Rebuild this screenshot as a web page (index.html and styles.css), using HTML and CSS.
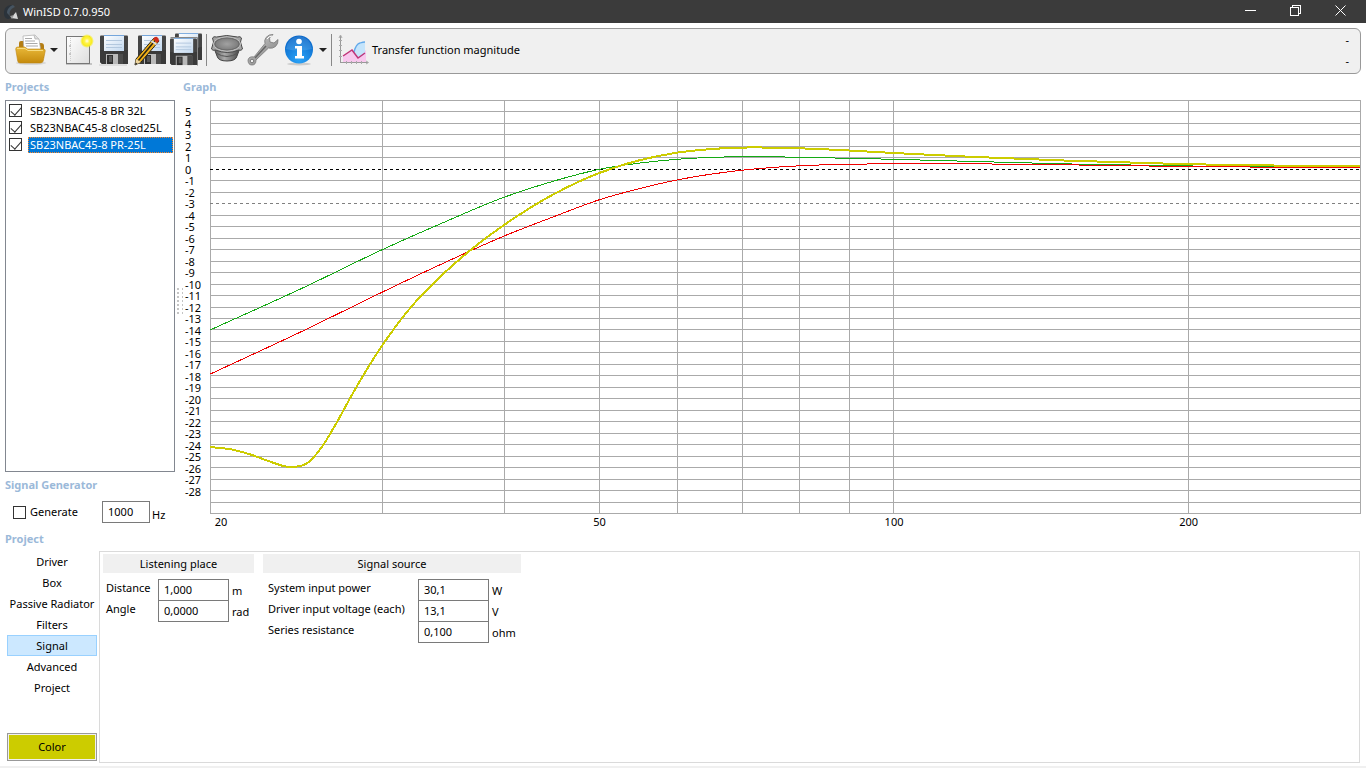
FILE: index.html
```
<!DOCTYPE html>
<html lang="en">

<head>
    <meta charset="UTF-8">
    <meta name="viewport" content="width=device-width, initial-scale=1.0">
    <title>WinISD 0.7.0.950</title>
    <link rel="stylesheet" href="styles.css">
</head>

<body>
    <header class="titlebar">
        <svg class="app-icon" viewBox="0 0 16 16">
            <path d="M9 1C4 1 1 4 1 9c0 4 2 6 5 6l2-2C4 12 4 6 10 3z" fill="#2b333b"/>
            <path d="M10 1C7 2 4 5 4 9l3 3c-1-4 0-7 5-9z" fill="#465461"/>
            <path d="M8 14l5-6 2 7z" fill="#d8d8d8"/>
            <path d="M7 12l4-1-2 4z" fill="#9a9a9a"/>
        </svg>
        <h1>WinISD 0.7.0.950</h1>
        <div class="window-buttons">
            <button type="button" aria-label="Minimize"><svg viewBox="0 0 11 11"><path d="M0 5.5h11"/></svg></button>
            <button type="button" aria-label="Restore"><svg viewBox="0 0 11 11"><path d="M.5 2.5h8v8h-8zM2.5 2.5v-2h8v8h-2"/></svg></button>
            <button type="button" aria-label="Close"><svg class="smooth" viewBox="0 0 11 11"><path d="M.5.5l10 10M10.500.5l-10 10"/></svg></button>
        </div>
    </header>

    <svg class="defs" aria-hidden="true">
        <defs>
            <linearGradient id="gold" x1="0" y1="0" x2="0" y2="1">
                <stop offset="0" stop-color="#e9b93a"/><stop offset="1" stop-color="#c58a0c"/>
            </linearGradient>
            <linearGradient id="paper" x1="0" y1="0" x2="1" y2="1">
                <stop offset="0" stop-color="#fff"/><stop offset="1" stop-color="#dedede"/>
            </linearGradient>
            <linearGradient id="label" x1="0" y1="0" x2="1" y2="1">
                <stop offset="0" stop-color="#fff"/><stop offset="1" stop-color="#c3d9f0"/>
            </linearGradient>
            <linearGradient id="steel" x1="0" y1="0" x2="1" y2="0">
                <stop offset="0" stop-color="#555"/><stop offset=".4" stop-color="#aaa"/><stop offset="1" stop-color="#444"/>
            </linearGradient>
            <linearGradient id="wrench" x1="0" y1="0" x2="1" y2="1">
                <stop offset="0" stop-color="#d4d4d4"/><stop offset="1" stop-color="#777"/>
            </linearGradient>
            <radialGradient id="blue" cx=".5" cy=".85" r=".8">
                <stop offset="0" stop-color="#2ba4f8"/><stop offset="1" stop-color="#0867c9"/>
            </radialGradient>
            <radialGradient id="glow">
                <stop offset="0" stop-color="#fffef0"/><stop offset=".35" stop-color="#fff34a"/><stop offset=".7" stop-color="#f8ec20"/><stop offset="1" stop-color="#f8ec20" stop-opacity="0"/>
            </radialGradient>
            <radialGradient id="cone">
                <stop offset="0" stop-color="#a2a2a2"/><stop offset="1" stop-color="#777"/>
            </radialGradient>
            <symbol id="floppy" viewBox="0 0 28 30" preserveAspectRatio="none">
                <path d="M1 .5h26q1 0 1 1V29H2L0 27V1.500Q0 .5 1 .5z" fill="#454545"/>
                <path d="M0 15h28v14H2l-2-2z" fill="#3a3a3a"/>
                <rect x="4" width="20" height="16" fill="url(#label)"/>
                <path d="M4 .5h20" stroke="#75a6dc"/>
                <path d="M6 5.500h16M6 9.500h16M6 12.500h16" stroke="#b3c8de"/>
                <rect x="6" y="19" width="17" height="10" fill="#b9b9b9"/>
                <rect x="7" y="20" width="6" height="9" fill="#303030"/>
                <rect x="9" y="21" width="3" height="6" fill="#555"/>
                <rect x="18" y="19" width="5" height="10" fill="#4c4c4c"/>
            </symbol>
        </defs>
    </svg>

    <nav class="toolbar">
        <button type="button" aria-label="Open project">
            <svg viewBox="0 0 32 32">
                <ellipse cx="17" cy="29" rx="15" ry="2" fill="#d8d8d8"/>
                <path d="M5 9q0-2 2-2h5l2 2h13q3 0 3 3v12H5z" fill="#b47d12"/>
                <path d="M9 2l12-1 4 4 2 13H10z" fill="#fff" stroke="#aaa" stroke-width=".7"/>
                <path d="M20 1l1 4h4" fill="#ddd" stroke="#aaa" stroke-width=".7"/>
                <path d="M11 4.500h7M11 7h10M11.500 9.500h12M12 12h12" stroke="#aaa"/>
                <path d="M1.700 15q0-2 2-2h7l3 2h15q3 0 2.500 2l-2 10q-.5 2-3 2H6q-2 0-2.300-2z" fill="url(#gold)" stroke="#bd8714" stroke-width=".6"/>
                <path d="M3 14.500h8l3 2h15" fill="none" stroke="#f7dc82"/>
            </svg>
        </button>
        <button type="button" class="arrow" aria-label="Open recent"></button>
        <button type="button" aria-label="New project">
            <svg viewBox="0 0 32 32">
                <path d="M4 30h26" stroke="#999" stroke-width="2" opacity=".5"/>
                <rect x="4.500" y="2.500" width="23" height="27" fill="url(#paper)" stroke="#777"/>
                <path d="M8.500 4v24" stroke="#ccc" stroke-dasharray="1 1"/>
                <circle cx="8" cy="12" r="1" fill="#bbb"/><circle cx="8" cy="20" r="1" fill="#bbb"/>
                <circle cx="25" cy="7" r="7" fill="url(#glow)"/>
            </svg>
        </button>
        <button type="button" aria-label="Save">
            <svg viewBox="0 0 32 32"><path d="M1 31h28" stroke="#ccc"/><use href="#floppy" x="2" y="1" width="28" height="30"/></svg>
        </button>
        <button type="button" aria-label="Save as">
            <svg viewBox="0 0 32 32">
                <use href="#floppy" x="4" y="1" width="28" height="30"/>
                <path d="M20 4l5 3L7 28l-6 3 1-6z" fill="#f2b21b" stroke="#2a2414"/>
                <path d="M21.500 6L4 27" stroke="#2a2414" stroke-width="1.500"/>
                <path d="M2 25l5 3-6 3z" fill="#eed6a0"/><path d="M1 31l.5-2.500 2 1.200z" fill="#222"/>
                <path d="M17.500 7l5 3.500" stroke="#ddd" stroke-width="2"/>
                <path d="M19 5q2-3 4-2t2 4l-2 2z" fill="#cf2b1c"/>
            </svg>
        </button>
        <button type="button" aria-label="Save all">
            <svg viewBox="0 0 32 32">
                <use href="#floppy" x="5" y="-1" width="27" height="28"/>
                <path d="M.5 3.500h27v28" fill="none" stroke="#888"/>
                <use href="#floppy" x="0" y="4" width="27" height="28"/>
            </svg>
        </button>
        <span class="separator"></span>
        <button type="button" aria-label="Drivers">
            <svg viewBox="0 0 32 32">
                <path d="M3 14l3 8q1 5 10 5t10-5l3-8z" fill="url(#steel)" stroke="#444"/>
                <path d="M5 19q11 7 22 0" fill="none" stroke="#555"/>
                <path d="M1.500 4q1-2 4-1 10-3 21 0 3-1 4 1l-1 4 2 7q-1 2-4 1-11 5-23 0-3 1-4-1l2-7z" fill="#a5a5a5" stroke="#4a4a4a"/>
                <ellipse cx="16" cy="10" rx="13.500" ry="7" fill="url(#cone)" stroke="#c4c4c4"/>
                <ellipse cx="16" cy="10" rx="12" ry="6" fill="none" stroke="#666" stroke-width=".8"/>
            </svg>
        </button>
        <button type="button" aria-label="Options">
            <svg viewBox="0 0 32 32">
                <path d="M26 .5q-4-.5-7 3-2 3-1 6L7 23q-5-1-6 3 0 5 4 5 4 0 4-5l12.500-12q4 1 7-1.500 3-3 2.500-7l-4 3.500-4-1-.5-4z" fill="url(#wrench)" stroke="#777" stroke-width=".8"/>
                <path d="M19 12L8 24" stroke="#666" stroke-width="1.500"/>
                <path d="M20 5q2-3 5-3" fill="none" stroke="#fff"/>
                <circle cx="5" cy="27" r="1.800" fill="#f0f0f0" stroke="#777"/>
            </svg>
        </button>
        <button type="button" aria-label="About">
            <svg viewBox="0 0 32 32">
                <ellipse cx="16" cy="30" rx="12" ry="1.500" fill="#ccc"/>
                <circle cx="16" cy="15.500" r="14" fill="url(#blue)"/>
                <path d="M3 15q2-12 13-13 11 1 13 13-13 3-26 0z" fill="#fff" opacity=".12"/>
                <circle cx="16" cy="7.500" r="2.800" fill="#fff"/>
                <path d="M12 12h7v10h2v2.500h-9V22h2v-7.500h-2z" fill="#fff"/>
            </svg>
        </button>
        <button type="button" class="arrow" aria-label="Help menu"></button>
        <span class="separator"></span>
        <button type="button" class="chart-type">
            <svg viewBox="0 0 32 32">
                <path d="M5 22l10-6 7 6 6-6v13H5z" fill="#f8c8ee"/>
                <path d="M15 18q3-10 12-10v12l-6 4z" fill="#c4e4fb"/>
                <path d="M16 18q2-8 6-9 3-1 5-1" fill="none" stroke="#62a9ea" stroke-width="1.300"/>
                <path d="M5 22l9-6 6 8 7-5" fill="none" stroke="#c03378" stroke-width="1.500"/>
                <path d="M2.500 2v26.500M2 28.500h28" fill="none" stroke="#999"/>
                <path d="M1 6.500h3M1 11.500h3M1 16.500h3M1 22.500h3M8.500 27v3M13.500 27v3M18.500 27v3M23.500 27v3M1 4l1.500-3L4 4M28 27l2.500 1.500L28 30" fill="none" stroke="#aaa"/>
            </svg>
            <span>Transfer function magnitude</span>
        </button>
        <div class="readout"><span>-</span><span>-</span></div>
    </nav>

    <main class="workspace">
        <aside class="sidebar">
            <h2>Projects</h2>
            <ul class="project-list">
                <li><input type="checkbox" id="p1" checked><label for="p1">SB23NBAC45-8 BR 32L</label></li>
                <li><input type="checkbox" id="p2" checked><label for="p2">SB23NBAC45-8 closed25L</label></li>
                <li class="selected"><input type="checkbox" id="p3" checked><label for="p3">SB23NBAC45-8 PR-25L</label></li>
            </ul>
            <h2>Signal Generator</h2>
            <div class="generator">
                <input type="checkbox" id="generate">
                <label for="generate">Generate</label>
                <input type="text" id="frequency" value="1000" aria-label="Frequency">
                <label for="frequency">Hz</label>
            </div>
        </aside>
        <div class="splitter"></div>
        <section class="graph">
            <h2>Graph</h2>
            <div class="y-axis" id="yAxis"></div>
            <svg class="plot" id="plot"></svg>
            <div class="x-axis" id="xAxis"></div>
        </section>
    </main>

    <h2 class="project-heading">Project</h2>
    <section class="project">
        <div class="tabs">
            <button type="button">Driver</button>
            <button type="button">Box</button>
            <button type="button">Passive Radiator</button>
            <button type="button">Filters</button>
            <button type="button" class="active">Signal</button>
            <button type="button">Advanced</button>
            <button type="button">Project</button>
            <button type="button" class="color">Color</button>
        </div>
        <form class="panel">
            <div class="group listening">
                <h3>Listening place</h3>
                <div class="field"><label for="distance">Distance</label><input type="text" id="distance" value="1,000"><span>m</span></div>
                <div class="field"><label for="angle">Angle</label><input type="text" id="angle" value="0,0000"><span>rad</span></div>
            </div>
            <div class="group source">
                <h3>Signal source</h3>
                <div class="field"><label for="power">System input power</label><input type="text" id="power" value="30,1"><span>W</span></div>
                <div class="field"><label for="voltage">Driver input voltage (each)</label><input type="text" id="voltage" value="13,1"><span>V</span></div>
                <div class="field"><label for="resistance">Series resistance</label><input type="text" id="resistance" value="0,100"><span>ohm</span></div>
            </div>
        </form>
    </section>
    <footer class="statusbar"></footer>

    <script src="graph.js"></script>
</body>

</html>
```
FILE: styles.css
```
* {
    box-sizing: border-box;
}

body {
    display: flex;
    flex-direction: column;
    min-height: 100vh;
    margin: 0;
    background: #fff;
    color: #000;
    font-family: "Noto Sans", "Open Sans", sans-serif;
    font-size: 11px;
    line-height: 16px;
}

button,
input {
    font: inherit;
    color: inherit;
}

button {
    padding: 0;
    border: none;
    background: none;
}

h2 {
    margin: 0;
    color: #9bb9d9;
    font-size: 11px;
    font-weight: 700;
}

.defs {
    position: absolute;
    width: 0;
    height: 0;
}

/* title bar */
.titlebar {
    display: flex;
    align-items: center;
    height: 23px;
    padding: 0 3px;
    background: #3b3b3b;
    color: #fff;
}

.app-icon {
    width: 16px;
    height: 16px;
}

.titlebar h1 {
    flex: 1;
    margin: 0 0 0 4px;
    font-size: 11px;
    font-weight: 400;
}

.window-buttons {
    display: flex;
    padding-bottom: 3px;
}

.window-buttons button {
    display: flex;
    justify-content: center;
    width: 45px;
}

.window-buttons svg {
    width: 11px;
    height: 11px;
    fill: none;
    stroke: #fff;
    shape-rendering: crispEdges;
}

.window-buttons .smooth {
    shape-rendering: auto;
}

/* toolbar */
.toolbar {
    display: flex;
    align-items: center;
    height: 46px;
    margin: 5px;
    padding: 0 8px 2px 6px;
    border: 1px solid #999;
    border-radius: 6px;
    background: #f0f0f0;
}

.toolbar button {
    display: flex;
    align-items: center;
    justify-content: center;
    width: 36px;
    height: 36px;
}

.toolbar svg {
    flex: none;
    width: 32px;
    height: 32px;
    overflow: visible;
}

.toolbar .arrow {
    width: 12px;
}

.arrow::before {
    content: "";
    border: 4px solid transparent;
    border-top-color: #222;
    border-bottom: none;
}

.separator {
    width: 1px;
    height: 32px;
    margin: 0 2px;
    background: #888;
}

.toolbar .chart-type {
    width: auto;
    gap: 2px;
    margin-left: 4px;
}

.readout {
    display: flex;
    flex-direction: column;
    gap: 5px;
    margin-left: auto;
    padding-right: 3px;
}

/* projects and graph */
.workspace {
    display: flex;
    flex: 1;
    min-height: 450px;
    padding: 0 5px;
}

.sidebar {
    display: flex;
    flex-direction: column;
    width: 170px;
}

.project-list {
    flex: 1;
    margin: 5px 0;
    padding: 1px;
    border: 1px solid #828790;
    list-style: none;
}

.project-list li {
    display: flex;
    align-items: center;
    gap: 6px;
    height: 17px;
    padding-left: 2px;
}

.project-list label {
    flex: 1;
    padding-left: 2px;
    white-space: nowrap;
}

.project-list .selected label {
    background: #0078d7;
    outline: 1px dotted #ff8728;
    outline-offset: -1px;
    color: #fff;
}

input[type="checkbox"] {
    display: flex;
    flex: none;
    justify-content: center;
    width: 13px;
    height: 13px;
    margin: 0;
    border: 1px solid #333;
    background: #fff;
    appearance: none;
}

input[type="checkbox"]:checked::before {
    content: "";
    width: 5px;
    height: 9px;
    border: solid #333;
    border-width: 0 1px 1px 0;
    transform: rotate(42deg);
}

input[type="text"] {
    height: 22px;
    padding: 0 5px 2px;
    border: 1px solid #7a7a7a;
    border-radius: 0;
    background: #fff;
}

.generator {
    display: flex;
    align-items: center;
    gap: 4px;
    height: 38px;
    padding-left: 8px;
}

.generator input[type="text"] {
    width: 48px;
    margin-left: auto;
}

.generator label:last-child {
    width: 23px;
    margin-left: -2px;
    padding-top: 5px;
}

.splitter {
    align-self: center;
    width: 8px;
    height: 28px;
    margin-top: -8px;
    background: radial-gradient(circle at 3px 2px, #c4c4c4 1px, transparent 1px) 0 0 / 5px 4px;
}

.graph {
    display: grid;
    flex: 1;
    grid-template-columns: 27px 1fr;
    grid-template-rows: 21px minmax(0, 1fr) 17px;
    min-width: 0;
}

.graph h2 {
    grid-column: 1 / -1;
}

.y-axis {
    display: flex;
    flex-direction: column;
    padding: 6px 0 17px 2px;
}

.y-axis span {
    flex: 1;
    min-height: 0;
    line-height: 11px;
}

.plot {
    width: 100%;
    height: 100%;
    min-height: 0;
    shape-rendering: crispEdges;
}

.plot path {
    fill: none;
}

.plot .grid {
    stroke: #aaa;
}

.plot .zero {
    stroke: #000;
    stroke-dasharray: 3 3;
}

.plot .minus3 {
    stroke: #808080;
    stroke-dasharray: 3 3;
}

.x-axis {
    position: relative;
    grid-column: 2;
}

/* tick labels are centred on their frequency */
.x-axis span {
    position: absolute;
    transform: translateX(-50%);
}

.x-axis span:first-child {
    padding-left: 22px;
}

/* project editor */
.project-heading {
    padding: 0 5px;
    margin-bottom: 4px;
}

.project {
    display: flex;
    min-height: 212px;
    padding: 0 6px 0 7px;
}

.tabs {
    display: flex;
    flex-direction: column;
    width: 90px;
    margin-right: 2px;
    padding-bottom: 2px;
}

.tabs button {
    height: 21px;
    border: 1px solid transparent;
    white-space: nowrap;
}

.tabs .active {
    border-color: #99d1ff;
    background: #cce8ff;
}

.tabs .color {
    height: 28px;
    margin-top: auto;
    border: 1px solid #999;
    background: #cccc00;
    box-shadow: inset 0 0 0 1px #f0f0f0;
}

.panel {
    display: flex;
    flex: 1;
    align-items: flex-start;
    gap: 9px;
    padding: 2px 3px;
    border: 1px solid #dadada;
}

.listening {
    width: 151px;
}

.source {
    width: 258px;
}

.group h3 {
    margin: 0 0 6px;
    background: #f0f0f0;
    font-size: 11px;
    font-weight: 400;
    line-height: 19px;
    text-align: center;
}

.field {
    display: flex;
    height: 21px;
    padding-left: 3px;
}

.field label {
    width: 52px;
    padding-top: 1px;
    white-space: nowrap;
}

.source .field {
    padding-left: 5px;
}

.source label {
    width: 150px;
}

.field input {
    width: 71px;
}

.field span {
    padding: 4px 0 0 3px;
}

.statusbar {
    height: 2px;
    margin-top: 3px;
    background: #f0f0f0;
}
```
FILE: graph.js
```
const F_MIN = 20, F_MAX = 300;
const DB_MAX = 6, DB_MIN = -30;

// [frequency in Hz, level in dB]
const curves = [
    {
        color: '#14aa14', width: 1,
        points: [[20, -14.05], [25, -10.3], [30, -7.05], [34.4, -4.8], [40, -2.47], [45, -1.05], [50, -.05],
            [55, .5], [60, .83], [70, 1.06], [80, 1.01], [100, .83], [120, .65],
            [150, .43], [200, .25], [250, .18], [300, .13]]
    },
    {
        color: '#f00000', width: 1,
        points: [[20, -17.9], [25, -14.05], [30, -10.75], [34.4, -8.35], [40, -5.85], [45, -4.15], [50, -2.7],
            [55, -1.72], [60, -.98], [70, -.12], [80, .26], [90, .4], [100, .45],
            [120, .44], [150, .35], [200, .2], [250, .14], [300, .1]]
    },
    {
        color: '#cccc00', width: 2,
        points: [[20, -24.25], [21, -24.45], [22, -24.9], [23, -25.5], [24.2, -26], [25.2, -25.6], [26, -24.3],
            [27, -22], [28, -19.55], [30, -15.4], [32, -12.2], [34.4, -9.4], [37, -7.03], [40, -4.88],
            [45, -2.18], [50, -.37], [55, .75], [60, 1.4], [65, 1.72], [70, 1.85], [80, 1.79],
            [90, 1.6], [100, 1.38], [120, 1.05], [150, .72], [200, .4], [250, .28], [300, .22]]
    }
];

const plot = document.getElementById('plot');

function fx(f) {
    return Math.log(f / F_MIN) / Math.log(F_MAX / F_MIN);
}

function addPath(d, cls) {
    const path = document.createElementNS('http://www.w3.org/2000/svg', 'path');
    path.setAttribute('d', d);
    if (cls) path.setAttribute('class', cls);
    plot.appendChild(path);
    return path;
}

// slope at point i, weighted by the distance to both neighbours
function slope(p, i) {
    const left = i > 0 ? (p[i][1] - p[i - 1][1]) / (p[i][0] - p[i - 1][0]) : null;
    const right = i < p.length - 1 ? (p[i + 1][1] - p[i][1]) / (p[i + 1][0] - p[i][0]) : null;
    if (left === null) return right;
    if (right === null) return left;
    const h1 = p[i][0] - p[i - 1][0], h2 = p[i + 1][0] - p[i][0];
    return (left * h2 + right * h1) / (h1 + h2);
}

function smooth(p) {
    let d = `M${p[0]}`;
    for (let i = 0; i < p.length - 1; i++) {
        const a = p[i], b = p[i + 1];
        const third = (b[0] - a[0]) / 3;
        d += `C${a[0] + third},${a[1] + slope(p, i) * third} ${b[0] - third},${b[1] - slope(p, i + 1) * third} ${b}`;
    }
    return d;
}

function draw() {
    const w = plot.clientWidth - 1, h = plot.clientHeight - 1;
    const x = f => fx(f) * w;
    const y = db => (DB_MAX - db) / (DB_MAX - DB_MIN) * h;
    plot.replaceChildren();

    let grid = '';
    for (const f of [20, 30, 40, 50, 60, 70, 80, 90, 100, 200, 300]) {
        grid += `M${Math.round(x(f)) + .5} 0V${h + 1}`;
    }
    for (let db = DB_MIN; db <= DB_MAX; db++) {
        if (db !== 0 && db !== -3) grid += `M0 ${Math.round(y(db)) + .5}H${w + 1}`;
    }
    addPath(grid, 'grid');
    addPath(`M0 ${Math.round(y(0)) + .5}H${w}`, 'zero');
    addPath(`M0 ${Math.round(y(-3)) + .5}H${w}`, 'minus3');

    for (const c of curves) {
        const path = addPath(smooth(c.points.map(([f, db]) => [x(f), y(db)])));
        path.setAttribute('stroke', c.color);
        path.setAttribute('stroke-width', c.width);
    }
}

for (let db = DB_MAX - 1; db > DB_MIN + 1; db--) {
    const label = document.createElement('span');
    label.textContent = db;
    document.getElementById('yAxis').appendChild(label);
}

for (const f of [20, 50, 100, 200]) {
    const label = document.createElement('span');
    label.textContent = f;
    label.style.left = fx(f) * 100 + '%';
    document.getElementById('xAxis').appendChild(label);
}

draw();
window.addEventListener('resize', draw);
```
